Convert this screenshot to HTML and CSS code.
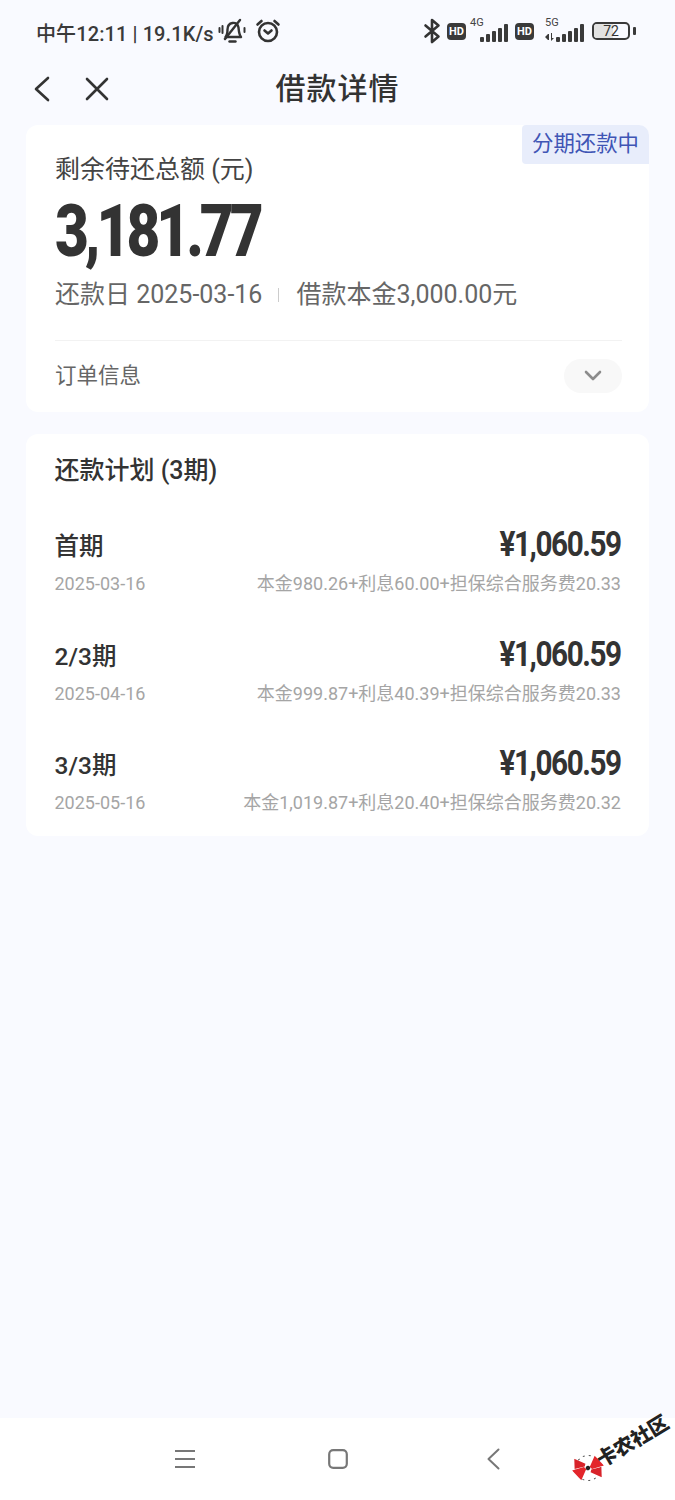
FILE: index.html
```html
<!DOCTYPE html>
<html lang="zh-CN">
<head>
    <meta charset="UTF-8">
    <meta name="viewport" content="width=device-width, initial-scale=1.0">
    <title>借款详情</title>
    <link rel="stylesheet" href="styles.css">
</head>
<body>
    <div class="page">
        <div class="status-bar">
            <div class="status-left">
                <span class="status-text">中午12:11 | 19.1K/s</span>
                <svg class="bell" width="28" height="26" viewBox="0 0 28 26" fill="none" stroke="#333" stroke-width="2.4" stroke-linecap="round" stroke-linejoin="round">
                    <path d="M7.5 19c1.8-2 2-4.500 2-7.500 0-3.500 2-6 5-6.500 3-.5 5.500 1 6 4.500 .3 3 .5 7 2.500 9.500z"/>
                    <path d="M11.500 23.500h6"/>
                    <path d="M7 21L22 2"/>
                    <path d="M1.500 10v4M4.500 8v7M26.500 10v4" stroke-width="2"/>
                </svg>
                <svg class="alarm" width="26" height="26" viewBox="0 0 26 26" fill="none" stroke="#333" stroke-width="2.6" stroke-linecap="round" stroke-linejoin="round">
                    <circle cx="13" cy="14" r="9"/>
                    <path d="M9.500 12.500l3.500 3 3.500-3"/>
                    <path d="M2.500 6.500l4-3.500M23.500 6.500l-4-3.500"/>
                </svg>
            </div>
            <div class="status-right">
                <svg class="bt" width="18" height="26" viewBox="0 0 18 26" fill="none" stroke="#333" stroke-width="2.6" stroke-linecap="round" stroke-linejoin="round">
                    <path d="M2.500 7.500l13 11-6.500 5.500V2l6.500 5.500-13 11"/>
                </svg>
                <span class="hd">HD</span>
                <div class="signal">
                    <span class="net">4G</span>
                    <span class="bars"><i class="b1"></i><i class="b2"></i><i class="b3"></i><i class="b4"></i><i class="b5"></i></span>
                </div>
                <span class="hd">HD</span>
                <div class="signal signal-5g">
                    <span class="net">5G</span>
                    <span class="bars">
                        <svg class="arrows" width="10" height="9" viewBox="0 0 10 9" fill="#3a3a3a"><path d="M0 5l3-3v6zM3 2h1v6H3zM6 1h1v5h2L6 9z"/></svg>
                        <i class="b1"></i><i class="b2"></i><i class="b3"></i><i class="b4"></i><i class="b5"></i>
                    </span>
                </div>
                <div class="battery"><span class="level"></span><span class="num">72</span></div>
                <span class="cap"></span>
            </div>
        </div>

        <div class="nav">
            <div class="nav-icons">
                <svg width="18" height="26" viewBox="0 0 18 26" fill="none" stroke="#333" stroke-width="2.6" stroke-linecap="round" stroke-linejoin="round"><path d="M15 2L3 13l12 11"/></svg>
                <svg width="24" height="24" viewBox="0 0 24 24" fill="none" stroke="#333" stroke-width="2.6" stroke-linecap="round"><path d="M2 2l20 20M22 2L2 22"/></svg>
            </div>
            <h1 class="nav-title">借款详情</h1>
        </div>

        <section class="card summary">
            <span class="tag">分期还款中</span>
            <div class="summary-label">剩余待还总额 (元)</div>
            <div class="summary-amount">3,181.77</div>
            <div class="summary-meta">
                <span>还款日 2025-03-16</span>
                <i class="meta-sep"></i>
                <span>借款本金3,000.00元</span>
            </div>
            <div class="order-row">
                <span>订单信息</span>
                <span class="toggle">
                    <svg width="18" height="11" viewBox="0 0 18 11" fill="none" stroke="#8c8c8c" stroke-width="2.6" stroke-linecap="round" stroke-linejoin="round"><path d="M2 2l7 7 7-7"/></svg>
                </span>
            </div>
        </section>

        <section class="card plan">
            <h2 class="plan-title">还款计划 (3期)</h2>
            <div class="plan-row">
                <div class="plan-line"><span class="period">首期</span><span class="money">¥1,060.59</span></div>
                <div class="plan-line sub"><span>2025-03-16</span><span>本金980.26+利息60.00+担保综合服务费20.33</span></div>
            </div>
            <div class="plan-row">
                <div class="plan-line"><span class="period">2/3期</span><span class="money">¥1,060.59</span></div>
                <div class="plan-line sub"><span>2025-04-16</span><span>本金999.87+利息40.39+担保综合服务费20.33</span></div>
            </div>
            <div class="plan-row">
                <div class="plan-line"><span class="period">3/3期</span><span class="money">¥1,060.59</span></div>
                <div class="plan-line sub"><span>2025-05-16</span><span>本金1,019.87+利息20.40+担保综合服务费20.32</span></div>
            </div>
        </section>

        <div class="bottom-nav">
            <svg width="20" height="18" viewBox="0 0 20 18" fill="none" stroke="#777" stroke-width="2"><path d="M0 1h20M0 9h20M0 17h20"/></svg>
            <svg width="20" height="20" viewBox="0 0 20 20" fill="none" stroke="#777" stroke-width="2.2"><rect x="1.200" y="1.200" width="17.600" height="17.600" rx="4"/></svg>
            <svg width="13" height="22" viewBox="0 0 13 22" fill="none" stroke="#777" stroke-width="2" stroke-linecap="round" stroke-linejoin="round"><path d="M11.500 1.500L1.500 11l10 9.500"/></svg>
        </div>

        <div class="watermark">
            <svg class="wm-logo" width="30" height="30" viewBox="0 0 30 30">
                <circle cx="15" cy="15" r="12.500" fill="#fff" stroke="#555" stroke-width="1" stroke-dasharray="2 4"/>
                <path d="M0 9l12 3 1 3-10 7zM30 21l-12-3-1-3 10-7z" fill="#e3262b"/>
                <path d="M8 0l7 10-2 2-10-3zM22 30l-7-10 2-2 10 3z" fill="#d8232a"/>
                <circle cx="15" cy="15" r="2.200" fill="#222"/>
            </svg>
            <span class="wm-text">卡农社区</span>
        </div>
    </div>
</body>
</html>
```

FILE: styles.css
```css
* {
    box-sizing: border-box;
}
html, body {
    margin: 0;
    padding: 0;
}
body {
    background-color: #f9faff;
    color: #333;
    font-family: "Roboto", "Noto Sans CJK SC", sans-serif;
}
.page {
    position: relative;
    height: 1500px;
    overflow: hidden;
    display: flex;
    flex-direction: column;
}

/* status bar */
.status-bar {
    height: 64px;
    padding: 0 39px 2px 36px;
    display: flex;
    justify-content: space-between;
    align-items: center;
}
.status-left {
    display: flex;
    align-items: center;
    gap: 4px;
}
.status-text {
    font-size: 20px;
    letter-spacing: 0.1px;
    font-weight: 500;
    color: #3a3a3a;
    margin-top: 2px;
}
.alarm {
    margin-left: 5px;
}
.status-right {
    display: flex;
    align-items: center;
    gap: 7px;
}
.hd {
    width: 19px;
    height: 17px;
    background-color: #3a3a3a;
    color: #fff;
    border-radius: 4px;
    font-size: 11px;
    font-weight: 700;
    text-align: center;
    line-height: 17px;
}
.bt {
    margin-right: -1px;
}
.signal {
    position: relative;
    width: 38px;
    height: 24px;
    margin-left: -3px;
}
.signal-5g {
    width: 42px;
    margin-left: 1px;
}
.net {
    position: absolute;
    left: 0;
    top: -3px;
    font-size: 11px;
    color: #444;
}
.signal-5g .net {
    left: 3px;
}
.bars {
    position: absolute;
    right: 0;
    bottom: 1px;
    display: flex;
    align-items: flex-end;
    gap: 2px;
}
.bars i {
    display: block;
    width: 4px;
    background-color: #3a3a3a;
    border-radius: 1px;
}
.bars .b1 { height: 5px; }
.bars .b2 { height: 8px; }
.bars .b3 { height: 11px; }
.bars .b4 { height: 14px; }
.bars .b5 { height: 18px; }
.bars .arrows {
    margin-bottom: 1px;
    margin-right: -1px;
}
.battery {
    position: relative;
    width: 38px;
    height: 18px;
    border: 2px solid #3a3a3a;
    border-radius: 5px;
    margin-left: 1px;
    overflow: hidden;
}
.level {
    position: absolute;
    left: 0;
    top: 0;
    bottom: 0;
    width: 55%;
    background-color: #e2e2e2;
}
.num {
    position: absolute;
    left: 0;
    right: 0;
    top: 0;
    text-align: center;
    font-size: 14px;
    line-height: 14px;
    color: #333;
}
.cap {
    width: 3px;
    height: 8px;
    background-color: #3a3a3a;
    border-radius: 1px;
    margin-left: -4px;
}

/* title bar */
.nav {
    position: relative;
    height: 50px;
    padding-bottom: 6px;
    display: flex;
    align-items: center;
    justify-content: center;
}
.nav-icons {
    position: absolute;
    left: 33px;
    top: 12px;
    display: flex;
    align-items: center;
    gap: 34px;
}
.nav-title {
    margin: 0;
    font-size: 30px;
    font-weight: 500;
    letter-spacing: 1px;
    color: #333;
}

.card {
    position: relative;
    margin: 0 26px;
    background-color: #fff;
    border-radius: 12px;
}

/* summary card */
.summary {
    margin-top: 11px;
    height: 287px;
    padding: 27px 27px 0 29px;
}
.tag {
    position: absolute;
    top: 0;
    right: 0;
    height: 39px;
    padding: 0 10px;
    background-color: #e8edfb;
    border-radius: 4px 10px 0 4px;
    color: #3f55b5;
    font-size: 21.4px;
    line-height: 38px;
}
.summary-label {
    font-size: 25px;
    line-height: 36px;
    color: #444;
}
/* the reference digits are a condensed face, Roboto is squeezed to fit */
.summary-amount {
    margin-top: 6px;
    font-size: 73px;
    line-height: 74px;
    font-weight: 900;
    letter-spacing: -5px;
    color: #333;
    transform: scaleX(0.8);
    transform-origin: left center;
}
.summary-meta {
    margin-top: 9px;
    display: flex;
    align-items: center;
    font-size: 25px;
    line-height: 36px;
    color: #666;
}
.meta-sep {
    width: 1px;
    height: 14px;
    margin: 0 17px 0 16px;
    background-color: #ccc;
}
.order-row {
    margin-top: 27px;
    height: 70px;
    border-top: 1px solid #f2f2f2;
    display: flex;
    justify-content: space-between;
    align-items: center;
    font-size: 21.5px;
    color: #666;
}
.order-row span:first-child {
    margin-bottom: 4px;
}
.toggle {
    width: 58px;
    height: 34px;
    background-color: #f8f8f8;
    border-radius: 17px;
    display: flex;
    align-items: center;
    justify-content: center;
}

/* plan card */
.plan {
    margin-top: 22px;
    height: 402px;
    padding: 19px 28px 0 28.5px;
}
.plan-title {
    margin: 0 0 36px;
    font-size: 25px;
    line-height: 36px;
    font-weight: 500;
    color: #333;
}
.plan-row {
    height: 109.5px;
}
.plan-line {
    display: flex;
    justify-content: space-between;
    align-items: center;
}
.period {
    font-size: 24.5px;
    font-weight: 500;
    line-height: 40px;
}
.money {
    font-size: 35px;
    font-weight: 700;
    line-height: 40px;
    margin-bottom: 4px;
    letter-spacing: -1.7px;
    transform: scaleX(0.85);
    transform-origin: right center;
}
.sub {
    margin-top: 2px;
    font-size: 18px;
    line-height: 26px;
    color: #a5a5a5;
}

/* bottom navigation */
.bottom-nav {
    position: absolute;
    left: 0;
    right: 0;
    bottom: 0;
    height: 82px;
    background-color: #fff;
    display: flex;
    align-items: center;
    padding-left: 175px;
    gap: 133px;
}
.bottom-nav svg:last-child {
    margin-left: 6px;
}

.watermark {
    position: absolute;
    left: 573px;
    top: 1453px;
    display: flex;
    align-items: center;
    transform: rotate(-31deg);
    transform-origin: 15px 15px;
}
.wm-text {
    margin-left: -3px;
    font-size: 20px;
    line-height: 30px;
    font-weight: 900;
    color: #222;
    white-space: nowrap;
}
```
